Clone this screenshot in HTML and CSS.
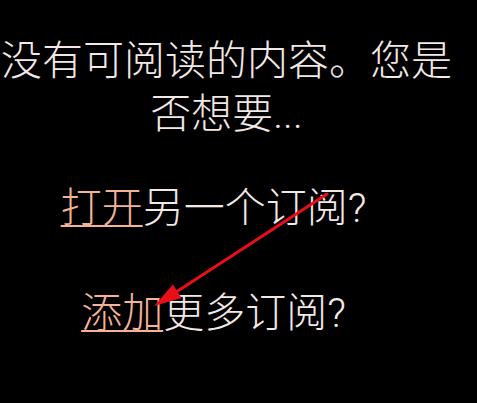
FILE: index.html
```html
<!DOCTYPE html>
<html lang="zh">
<head>
<meta charset="utf-8">
<link rel="stylesheet" href="styles.css">
</head>
<body>
<main class="empty">
  <p class="msg">没有可阅读的内容。您是否想要...</p>
  <p class="opt opt-open"><a class="link" href="#">打开</a>另一个订阅?</p>
  <p class="opt opt-add"><a class="link" href="#">添加</a>更多订阅?</p>
</main>
<svg class="arrow" width="477" height="403" viewBox="0 0 477 403">
  <line x1="327" y1="194" x2="170" y2="296" stroke="#ea0e18" stroke-width="3" stroke-linecap="round"/>
  <polygon points="154,306 173,284.5 181.5,298" fill="#ea0e18"/>
</svg>
</body>
</html>
```
FILE: styles.css
```css
html, body {
  margin: 0;
  padding: 0;
  background: #000;
}
body {
  width: 477px;
  height: 403px;
  overflow: hidden;
  position: relative;
  font-family: Roboto, "Noto Sans CJK SC", "Noto Sans", sans-serif;
  font-weight: 300;
  color: #f2e8e6;
}
.empty {
  width: 453px;
  padding-top: 35px;
  text-align: center;
}
.msg {
  margin: 0;
  font-size: 41px;
  line-height: 53px;
}
.opt {
  margin: 0;
  font-size: 41px;
  line-height: 53px;
  padding-right: 26px;
}
.opt-open {
  margin-top: 41px;
}
.opt-add {
  margin-top: 52px;
}
.link {
  color: #f4b397;
  text-decoration: underline;
  text-decoration-thickness: 2px;
  text-underline-offset: 3px;
}
.arrow {
  position: absolute;
  left: 0;
  top: 0;
  pointer-events: none;
}
```
